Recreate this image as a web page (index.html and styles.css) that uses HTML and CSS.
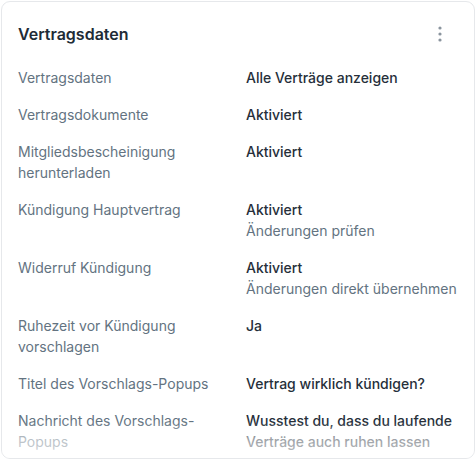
FILE: index.html
```html
<!DOCTYPE html>
<html lang="de">
<head>
<meta charset="utf-8">
<link rel="stylesheet" href="styles.css">
</head>
<body>
<div class="card">
  <div class="card-header">
    <h2 class="title">Vertragsdaten</h2>
    <button class="more" aria-label="Mehr">
      <svg width="20" height="20" viewBox="0 0 20 20"><circle cx="10" cy="4" r="1.6"/><circle cx="10" cy="10" r="1.6"/><circle cx="10" cy="16" r="1.6"/></svg>
    </button>
  </div>
  <dl class="list">
    <dt>Vertragsdaten</dt>
    <dd>Alle Verträge anzeigen</dd>
    <dt>Vertragsdokumente</dt>
    <dd>Aktiviert</dd>
    <dt>Mitgliedsbescheinigung herunterladen</dt>
    <dd>Aktiviert</dd>
    <dt>Kündigung Hauptvertrag</dt>
    <dd>Aktiviert<span class="sub">Änderungen prüfen</span></dd>
    <dt>Widerruf Kündigung</dt>
    <dd>Aktiviert<span class="sub">Änderungen direkt übernehmen</span></dd>
    <dt>Ruhezeit vor Kündigung vorschlagen</dt>
    <dd>Ja</dd>
    <dt>Titel des Vorschlags-Popups</dt>
    <dd>Vertrag wirklich kündigen?</dd>
    <dt>Nachricht des Vorschlags-Popups</dt>
    <dd>Wusstest du, dass du laufende Verträge auch ruhen lassen</dd>
  </dl>
  <div class="fade"></div>
</div>
</body>
</html>
```
FILE: styles.css
```css
* { box-sizing: border-box; }
html, body { margin: 0; padding: 0; background: #ffffff; }
body {
  font-family: "Inter", "Noto Sans", sans-serif;
  -webkit-font-smoothing: antialiased;
}
.card {
  position: relative;
  margin: 1px 0 0 1px;
  width: 474px;
  height: 458px;
  border: 1px solid #e6e8eb;
  border-radius: 9px;
  background: #fff;
  padding: 20px 10px 0 16px;
  overflow: hidden;
}
.card-header {
  display: flex;
  align-items: center;
  justify-content: space-between;
  height: 24px;
  margin-bottom: 20.5px;
}
.title {
  margin: 0;
  font-size: 16px;
  line-height: 24px;
  font-weight: 600;
  color: #212b36;
}
.more {
  border: 0;
  background: none;
  padding: 0;
  margin-right: 14px;
  width: 20px;
  height: 20px;
  display: flex;
}
.more svg { fill: #8a949e; }
.list {
  margin: 0;
  display: grid;
  grid-template-columns: 228px 1fr;
  row-gap: 16px;
  font-size: 14px;
  line-height: 21px;
}
.list dt {
  color: #637381;
  padding-right: 24px;
}
.list dd {
  margin: 0;
  color: #262f3a;
  font-weight: 500;
  display: flex;
  flex-direction: column;
  padding-right: 8px;
}
.list .sub {
  color: #637381;
  font-weight: 400;
  white-space: nowrap;
}
.fade {
  position: absolute;
  left: 0;
  right: 0;
  bottom: 0;
  height: 36px;
  background: linear-gradient(to bottom, rgba(255,255,255,0) 0%, rgba(255,255,255,0.55) 45%, rgba(255,255,255,0.7) 100%);
  pointer-events: none;
}
```
